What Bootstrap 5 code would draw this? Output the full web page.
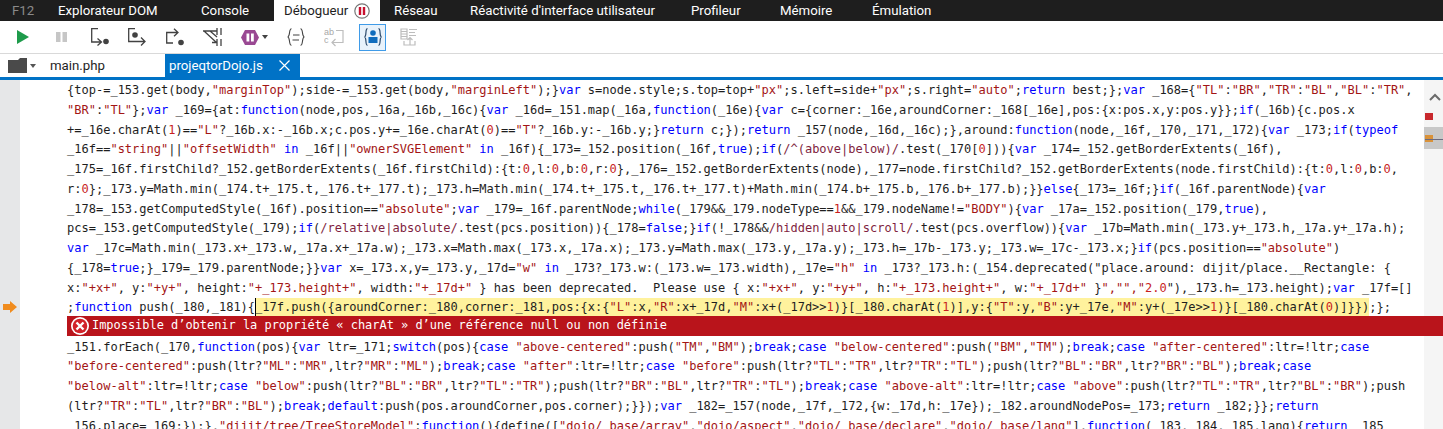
<!DOCTYPE html>
<html lang="fr">
<head>
<meta charset="utf-8">
<title>F12</title>
<link rel="stylesheet" href="https://cdn.jsdelivr.net/npm/bootstrap@5.3.0/dist/css/bootstrap.min.css">
<style>
html,body{height:429px;overflow:hidden;background:#fff}
body{font-family:Roboto,"Noto Sans",sans-serif;font-size:13.25px;color:#1e1e1e}
.f12-tabs{height:21px;background:#1e1e1e;color:#fff;line-height:17px}
.f12-tab{display:flex;align-items:center;height:21px;flex:none}
.f12-tab.on{background:#fff;color:#1e1e1e;padding:0 10px}
.tab-f{width:58px;padding-left:12px;color:#8a8a8a}
.tab-dom{width:143px}.tab-con{width:73px}.tab-dbg{width:106px}
.tab-res{width:90px;padding-left:14px}.tab-ui{width:221px}.tab-pro{width:89px}.tab-mem{width:92px}
.f12-tool{height:33px;border-bottom:1px solid #d9d9d9}
.tool-ic{flex:none;display:block}
.m1{margin-left:17px}.m2{margin-left:27px}.m3{margin-left:24px}.m4{margin-left:19px}.m5{margin-left:20px}.m6{margin-left:19px}.m7{margin-left:19px}.m8{margin-left:19px}.m9{margin-left:19px}.m10{margin-left:15px}.m11{margin-left:14px}
.sel-box{width:27px;height:27px;background:#e8f2fb;border:1px solid #3f9be8;flex:none}
.f12-files{height:23px}
.f12-file{height:23px;display:flex;align-items:center;flex:none}
.file-main{width:129px;padding-left:14px}
.f12-file.on{background:#0072c6;color:#fff;width:135px;padding-left:4px}
.file-x{margin-left:auto;margin-right:10px}
.folder-ic{margin:4px 0 0 8px;flex:none}
.caret-ic{margin:10px 0 0 3px;flex:none}
.f12-rule{height:3px;background:#0072c6}
.f12-body{height:349px;overflow:hidden}
.f12-gutter{width:20px;background:#e6e7e8;flex:none;position:relative}
.f12-code{flex:1 1 auto;min-width:0;padding:1px 0 0 47px;font-family:"DejaVu Sans Mono","Liberation Mono",monospace;font-size:12.02px;line-height:19.75px;color:#1e1e1e;white-space:pre}
.f12-mini{width:19px;flex:none;background:#f5f5f5;position:relative}
.code-ln{height:19.75px}
.k{color:#0000ff}.s{color:#a31515}.n{color:#c81e1e}.re{color:#811f3f}
.cur{display:inline-block;height:19px;background:#fff29d;box-shadow:inset 1px 0 0 #000}
.err-ln{position:relative;z-index:1;background:#b9141b;color:#fff;height:20px;width:1376px;display:flex;align-items:center;font-size:11.95px;margin:-2px 0 1.5px}
.err-ic{margin:0 3px 0 4px;flex:none}
.arrow-here{position:absolute;left:3px;top:221px}
.mini-up{position:absolute;left:5px;top:13px}
.mini-red{position:absolute;left:1px;top:33px;width:8px;height:7px;background:#c8282d}
.mini-thumb{position:absolute;left:0;top:47px;width:19px;height:22px;background:#c8c8c8}
.mini-or{position:absolute;left:1px;top:55px;width:8px;height:7px;background:#d9923a}
.mini-line{position:absolute;left:1px;top:59px;width:18px;height:1px;background:#6a6a80}
.ab{font-family:"Liberation Sans",sans-serif;font-size:9px;fill:#a8a8a8}
</style>
</head>
<body>
<div class="f12-tabs d-flex">
  <div class="f12-tab tab-f">F12</div>
  <div class="f12-tab tab-dom">Explorateur DOM</div>
  <div class="f12-tab tab-con">Console</div>
  <div class="f12-tab tab-dbg on">Débogueur
    <svg class="ms-auto" width="16" height="16" viewBox="0 0 16 16"><circle cx="8" cy="8" r="7.200" fill="#fff" stroke="#777" stroke-width="1.200"/><rect x="4.800" y="4" width="2.400" height="8" fill="#c8102e"/><rect x="8.800" y="4" width="2.400" height="8" fill="#c8102e"/></svg></div>
  <div class="f12-tab tab-res">Réseau</div>
  <div class="f12-tab tab-ui">Réactivité d'interface utilisateur</div>
  <div class="f12-tab tab-pro">Profileur</div>
  <div class="f12-tab tab-mem">Mémoire</div>
  <div class="f12-tab">Émulation</div>
</div>
<div class="f12-tool d-flex align-items-center">
  <svg class="tool-ic m1" width="12" height="14" viewBox="0 0 12 14"><path d="M0 0l12 7-12 7z" fill="#1e9b4b"/></svg>
  <svg class="tool-ic m2" width="11" height="10" viewBox="0 0 11 10"><rect width="4.500" height="10" fill="#c6c6c6"/><rect x="6.500" width="4.500" height="10" fill="#c6c6c6"/></svg>
  <svg class="tool-ic m3" width="18" height="18" viewBox="0 0 18 18" fill="none" stroke="#424242" stroke-width="1.300"><path d="M7 .7H.7V14H10M6.500 10.500l4 3.500-4 3.500"/><circle cx="15" cy="13.500" r="2.800" fill="#424242" stroke="none"/></svg>
  <svg class="tool-ic m4" width="18" height="18" viewBox="0 0 18 18" fill="none" stroke="#424242" stroke-width="1.300"><path d="M7 .7H.7v12.800H17M13 9.500l4 4-4 4"/><circle cx="7" cy="7" r="2.800" fill="#424242" stroke="none"/></svg>
  <svg class="tool-ic m5" width="18" height="18" viewBox="0 0 18 18" fill="none" stroke="#424242" stroke-width="1.300"><path d="M7 15H.7V4.500H12M8 .7l4 3.800-4 3.800"/><circle cx="15" cy="14.500" r="2.800" fill="#424242" stroke="none"/></svg>
  <svg class="tool-ic m6" width="19" height="18" viewBox="0 0 19 18" fill="none" stroke="#424242" stroke-width="1.300"><path d="M0 3h14M14 0v7M18 0v7M14 11v7M18 11v7M1 3l13 12M9 14.500h5M7 3l7 6"/></svg>
  <svg class="tool-ic m7" width="27" height="15" viewBox="0 0 27 15"><path d="M4 0h10l4 7.500-4 7.500H4L0 7.500z" fill="#9a4993"/><rect x="5.500" y="3.500" width="2.800" height="8" fill="#fff"/><rect x="10" y="3.500" width="2.800" height="8" fill="#fff"/><path d="M21 5h6l-3 4z" fill="#424242"/></svg>
  <svg class="tool-ic m8" width="18" height="18" viewBox="0 0 18 18" fill="none" stroke="#424242" stroke-width="1.100"><path d="M4.500.7C1.500.7 3.500 8.500.7 9c2.800.5.8 8.300 3.800 8.300M13.500.7c3 0 1 7.800 3.800 8.300-2.800.5-.8 8.300-3.800 8.300M6 7h6.500M5.500 12H12"/></svg>
  <svg class="tool-ic m9" width="20" height="20" viewBox="0 0 20 20" fill="none" stroke="#bdbdbd" stroke-width="1.200"><text class="ab" x="0" y="8" stroke="none">ab</text><text class="ab" x="0" y="16" stroke="none">c</text><path d="M12 3.500h7v12H8M11.500 12L8 15.500l3.500 3.500"/></svg>
  <span class="sel-box d-flex align-items-center justify-content-center m10">
    <svg width="18" height="18" viewBox="0 0 18 18"><path d="M3.500.7C.8.700 3 8.500.5 9c2.500.5.3 8.300 3 8.300M14.500.7c2.700 0 .5 7.800 3 8.300-2.500.5-.3 8.300-3 8.300" fill="none" stroke="#2c4a6b" stroke-width="1.200"/><circle cx="9" cy="5" r="2.800" fill="#0f6cbd"/><path d="M4.500 9h9v6h-9z" fill="#0f6cbd"/></svg>
  </span>
  <svg class="tool-ic m11" width="18" height="18" viewBox="0 0 18 18" fill="none" stroke="#bdbdbd" stroke-width="1.200"><path d="M1 1h6v10H1zM1 3.500h6M1 6h6M1 8.500h6M9 1.500h8M9 4.500h6M9 7.500h7M4 13v4h11v-4M10 17V9.500M7.500 12L10 9.500l2.500 2.500"/></svg>
</div>
<div class="f12-files d-flex">
  <svg class="folder-ic" width="19" height="15" viewBox="0 0 19 15"><path d="M0 2h10l2-2h7v15H0z" fill="#4a4a4a"/></svg>
  <svg class="caret-ic" width="6" height="4" viewBox="0 0 6 4"><path d="M0 0h6L3 4z" fill="#555"/></svg>
  <div class="f12-file file-main">main.php</div>
  <div class="f12-file on">projeqtorDojo.js
    <svg class="file-x" width="11" height="11" viewBox="0 0 11 11"><path d="M.5.5l10 10M10.500.5l-10 10" stroke="#fff" stroke-width="1.200"/></svg></div>
</div>
<div class="f12-rule"></div>
<div class="f12-body d-flex">
  <div class="f12-gutter">
    <svg class="arrow-here" width="14" height="12" viewBox="0 0 14 12"><path d="M0 3h7V0l7 6-7 6V9H0z" fill="#f08c1e"/></svg>
  </div>
  <div class="f12-code" id="code"><div class="code-ln">{top-=_153.get(body,"marginTop");side-=_153.get(body,"marginLeft");}var s=node.style;s.top=top+"px";s.left=side+"px";s.right="auto";return best;};var _168={"TL":"BR","TR":"BL","BL":"TR",</div><div class="code-ln">"BR":"TL"};var _169={at:function(node,pos,_16a,_16b,_16c){var _16d=_151.map(_16a,function(_16e){var c={corner:_16e,aroundCorner:_168[_16e],pos:{x:pos.x,y:pos.y}};if(_16b){c.pos.x</div><div class="code-ln">+=_16e.charAt(1)=="L"?_16b.x:-_16b.x;c.pos.y+=_16e.charAt(0)=="T"?_16b.y:-_16b.y;}return c;});return _157(node,_16d,_16c);},around:function(node,_16f,_170,_171,_172){var _173;if(typeof</div><div class="code-ln">_16f=="string"||"offsetWidth" in _16f||"ownerSVGElement" in _16f){_173=_152.position(_16f,true);if(/^(above|below)/.test(_170[0])){var _174=_152.getBorderExtents(_16f),</div><div class="code-ln">_175=_16f.firstChild?_152.getBorderExtents(_16f.firstChild):{t:0,l:0,b:0,r:0},_176=_152.getBorderExtents(node),_177=node.firstChild?_152.getBorderExtents(node.firstChild):{t:0,l:0,b:0,</div><div class="code-ln">r:0};_173.y=Math.min(_174.t+_175.t,_176.t+_177.t);_173.h=Math.min(_174.t+_175.t,_176.t+_177.t)+Math.min(_174.b+_175.b,_176.b+_177.b);}}else{_173=_16f;}if(_16f.parentNode){var</div><div class="code-ln">_178=_153.getComputedStyle(_16f).position=="absolute";var _179=_16f.parentNode;while(_179&amp;&amp;_179.nodeType==1&amp;&amp;_179.nodeName!="BODY"){var _17a=_152.position(_179,true),</div><div class="code-ln">pcs=_153.getComputedStyle(_179);if(/relative|absolute/.test(pcs.position)){_178=false;}if(!_178&amp;&amp;/hidden|auto|scroll/.test(pcs.overflow)){var _17b=Math.min(_173.y+_173.h,_17a.y+_17a.h);</div><div class="code-ln">var _17c=Math.min(_173.x+_173.w,_17a.x+_17a.w);_173.x=Math.max(_173.x,_17a.x);_173.y=Math.max(_173.y,_17a.y);_173.h=_17b-_173.y;_173.w=_17c-_173.x;}if(pcs.position=="absolute")</div><div class="code-ln">{_178=true;}_179=_179.parentNode;}}var x=_173.x,y=_173.y,_17d="w" in _173?_173.w:(_173.w=_173.width),_17e="h" in _173?_173.h:(_154.deprecated("place.around: dijit/place.__Rectangle: {</div><div class="code-ln">x:"+x+", y:"+y+", height:"+_173.height+", width:"+_17d+" } has been deprecated.  Please use { x:"+x+", y:"+y+", h:"+_173.height+", w:"+_17d+" }","","2.0"),_173.h=_173.height);var _17f=[]</div><div class="code-ln" id="active">;function push(_180,_181){_17f.push({aroundCorner:_180,corner:_181,pos:{x:{"L":x,"R":x+_17d,"M":x+(_17d&gt;&gt;1)}[_180.charAt(1)],y:{"T":y,"B":y+_17e,"M":y+(_17e&gt;&gt;1)}[_180.charAt(0)]}});};</div><div class="err-ln"><svg class="err-ic" width="18" height="18" viewBox="0 0 18 18"><circle cx="9" cy="9" r="9" fill="#fff"/><circle cx="9" cy="9" r="7.300" fill="#d2232a"/><path d="M5.500 5.500l7 7M12.500 5.500l-7 7" stroke="#fff" stroke-width="2.400"/></svg><span>Impossible d’obtenir la propriété « charAt » d’une référence null ou non définie</span></div><div class="code-ln">_151.forEach(_170,function(pos){var ltr=_171;switch(pos){case "above-centered":push("TM","BM");break;case "below-centered":push("BM","TM");break;case "after-centered":ltr=!ltr;case</div><div class="code-ln">"before-centered":push(ltr?"ML":"MR",ltr?"MR":"ML");break;case "after":ltr=!ltr;case "before":push(ltr?"TL":"TR",ltr?"TR":"TL");push(ltr?"BL":"BR",ltr?"BR":"BL");break;case</div><div class="code-ln">"below-alt":ltr=!ltr;case "below":push(ltr?"BL":"BR",ltr?"TL":"TR");push(ltr?"BR":"BL",ltr?"TR":"TL");break;case "above-alt":ltr=!ltr;case "above":push(ltr?"TL":"TR",ltr?"BL":"BR");push</div><div class="code-ln">(ltr?"TR":"TL",ltr?"BR":"BL");break;default:push(pos.aroundCorner,pos.corner);}});var _182=_157(node,_17f,_172,{w:_17d,h:_17e});_182.aroundNodePos=_173;return _182;}};return</div><div class="code-ln">_156.place=_169;});},"dijit/tree/TreeStoreModel":function(){define(["dojo/_base/array","dojo/aspect","dojo/_base/declare","dojo/_base/lang"],function(_183,_184,_185,lang){return _185</div></div>
  <div class="f12-mini"><svg class="mini-up" width="12" height="8" viewBox="0 0 12 8"><path d="M1 7l5-5 5 5" fill="none" stroke="#6b6b6b" stroke-width="2"/></svg><div class="mini-red"></div><div class="mini-thumb"></div><div class="mini-or"></div><div class="mini-line"></div></div>
</div>
<script src="https://cdn.jsdelivr.net/npm/bootstrap@5.3.0/dist/js/bootstrap.bundle.min.js"></script>
<script>
// syntax colouring of the code lines
const rx=/("[^"]*")|(\/\^\(above\|below\)\/|\/[a-z|]+\/)|\b(var|function|return|if|else|while|switch|case|break|default|typeof|in|true|false)\b|(?<![\w.])(\d+(?:\.\d+)?)(?![\w])/g;
const esc=s=>s.replace(/&/g,'&amp;').replace(/</g,'&lt;').replace(/>/g,'&gt;');
const hl=t=>{let o='',i=0,m;rx.lastIndex=0;while((m=rx.exec(t))){o+=esc(t.slice(i,m.index));const c=m[1]?'s':m[2]?'re':m[3]?'k':'n';o+='<span class="'+c+'">'+esc(m[0])+'</span>';i=m.index+m[0].length;}return o+esc(t.slice(i));};
document.querySelectorAll('.code-ln').forEach(l=>{
  if(l.id==='active'){const t=l.textContent,a=26,b=t.length-3;l.innerHTML=hl(t.slice(0,a))+'<span class="cur">'+hl(t.slice(a,b))+'</span>'+hl(t.slice(b));}
  else l.innerHTML=hl(l.textContent);
});
</script>
</body>
</html>
